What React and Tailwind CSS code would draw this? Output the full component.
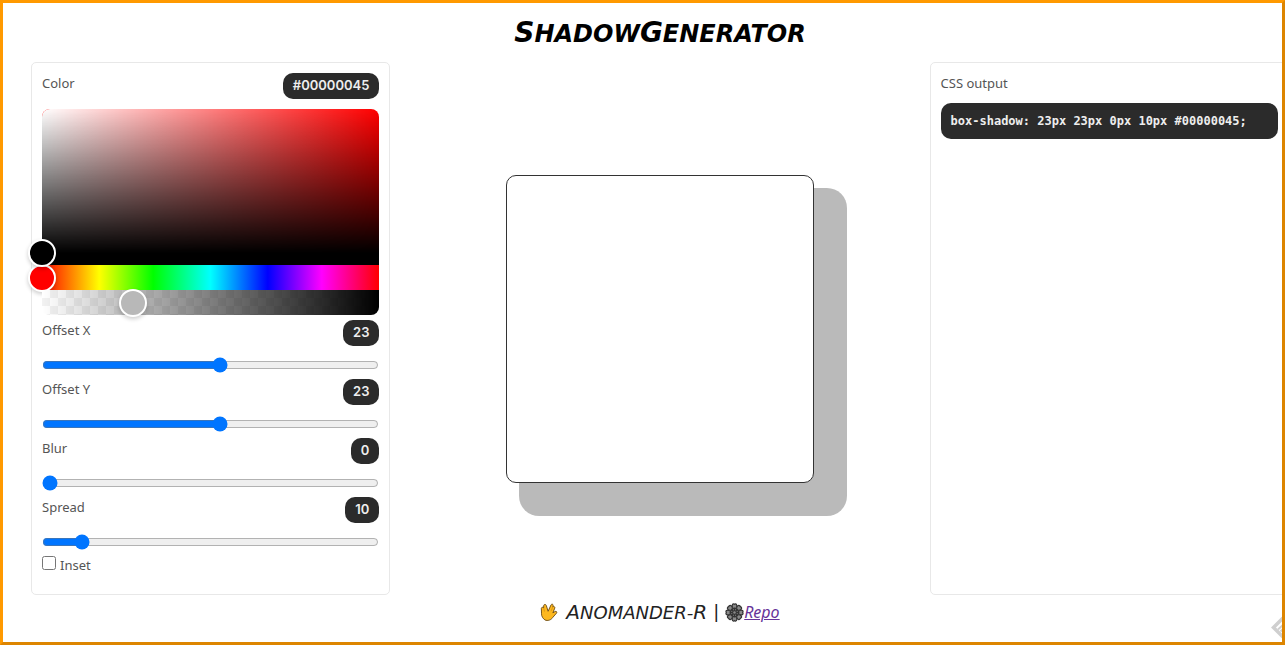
import React, { useState } from "react";

const hueTrack =
  "bg-[linear-gradient(to_right,#f00_0%,#ff0_17%,#0f0_33%,#0ff_50%,#00f_67%,#f0f_83%,#f00_100%)]";

const thumb =
  "block h-7 w-full cursor-pointer appearance-none bg-transparent outline-none [&::-webkit-slider-thumb]:size-7 [&::-webkit-slider-thumb]:appearance-none [&::-webkit-slider-thumb]:rounded-full [&::-webkit-slider-thumb]:border-2 [&::-webkit-slider-thumb]:border-white [&::-webkit-slider-thumb]:shadow-[0_2px_4px_rgba(0,0,0,0.2)]";

function Badge({ children }) {
  return (
    <output className="flex h-[26px] items-center rounded-[10px] bg-[#2b2b2b] px-[10px] font-['Inter',sans-serif] text-[13px] font-semibold text-[#eee]">
      {children}
    </output>
  );
}

function ColorPicker({ hue, alpha, onHue, onAlpha }) {
  return (
    <div className="mt-[10px] flex flex-col">
      <div
        className="relative z-10 h-[156px] rounded-t-lg border-b-12 border-black bg-[linear-gradient(to_top,#000,transparent),linear-gradient(to_right,#fff,transparent)]"
        style={{ backgroundColor: `hsl(${hue} 100% 50%)` }}
      >
        <button
          type="button"
          aria-label="Saturation and brightness"
          className="absolute top-full left-0 size-7 -translate-x-1/2 -translate-y-1/2 rounded-full border-2 border-white bg-black shadow-[0_2px_4px_rgba(0,0,0,0.2)]"
        />
      </div>
      <div className={`flex h-[25px] items-center ${hueTrack}`}>
        <div className="-mx-[14px] flex-1">
          <input
            type="range"
            aria-label="Hue"
            min="0"
            max="360"
            value={hue}
            onChange={(e) => onHue(Number(e.target.value))}
            className={`${thumb} [&::-webkit-slider-thumb]:bg-[#f00]`}
          />
        </div>
      </div>
      <div className="flex h-[25px] items-center rounded-b-lg bg-[linear-gradient(to_right,transparent,#000),repeating-conic-gradient(#f2f2f2_0%_25%,#fff_0%_50%)] bg-[size:100%_100%,16px_16px]">
        <div className="-mx-[14px] flex-1">
          <input
            type="range"
            aria-label="Alpha"
            min="0"
            max="255"
            value={alpha}
            onChange={(e) => onAlpha(Number(e.target.value))}
            className={`${thumb} [&::-webkit-slider-thumb]:bg-[#b8b8b8]`}
          />
        </div>
      </div>
    </div>
  );
}

function Slider({ id, label, min, max, value, onChange }) {
  return (
    <div className="h-[59px]">
      <div className="flex items-start justify-between">
        <label htmlFor={id} className="leading-5">
          {label}
        </label>
        <Badge>{value}</Badge>
      </div>
      <div className="mt-[11px] flex">
        <input
          id={id}
          type="range"
          min={min}
          max={max}
          value={value}
          onChange={(e) => onChange(Number(e.target.value))}
          className="h-4 w-full accent-[#0075ff]"
        />
      </div>
    </div>
  );
}

function Salute() {
  return (
    <svg viewBox="0 0 20 20" className="size-[18px]" aria-hidden="true">
      <path
        d="M5.500 18.800C3.500 17.500 1.600 15 1.700 12L1.500 6C1.700 4.500 3.400 4.300 4 5.500L4.100 2.800C4.500 1.200 6.500 1.200 7 2.800L9 9.200L12.300 2C13 .8 14.800 1.300 14.600 2.800L14.300 4.200C15.500 3.400 16.900 4.400 16.400 5.700L14.300 11L16.800 9.400C18.300 8.800 19.200 10.200 18.300 11.300L13.800 16.500C12.500 18.700 8.500 20.300 5.500 18.800Z"
        fill="#fdb81e"
        stroke="#6a4a12"
        strokeWidth="1"
        strokeLinejoin="round"
      />
      <path d="M4 5.500L5 9.500M14.300 4.200L12.300 9" fill="none" stroke="#c98512" strokeWidth="0.700" />
    </svg>
  );
}

const spokes = [0, 45, 90, 135, 180, 225, 270, 315];

function Wheel() {
  return (
    <svg viewBox="-10 -10 20 20" className="size-[19px]" fill="none" stroke="#333" aria-hidden="true">
      <circle r="6" fill="#8a8a8a" stroke="none" />
      <circle r="2" strokeWidth="1.200" />
      {spokes.map((a) => (
        <g key={a} transform={`rotate(${a})`}>
          <path d="M0 -2V-9" strokeWidth="1.100" />
          <path
            d="M-2.100 -5.200C-3.400 -8 -1.600 -9.800 0 -8.600C1.600 -9.800 3.400 -8 2.100 -5.200"
            fill="#8a8a8a"
            strokeWidth="1.300"
          />
          <path d="M0 -3L-2.100 -5.400M0 -3L2.100 -5.400" strokeWidth="1.100" />
        </g>
      ))}
    </svg>
  );
}

export default function App() {
  const [hue, setHue] = useState(0);
  const [alpha, setAlpha] = useState(69);
  const [x, setX] = useState(23);
  const [y, setY] = useState(23);
  const [blur, setBlur] = useState(0);
  const [spread, setSpread] = useState(10);
  const [inset, setInset] = useState(false);

  const color = `#000000${alpha.toString(16).padStart(2, "0")}`;
  const shadow = `${inset ? "inset " : ""}${x}px ${y}px ${blur}px ${spread}px ${color}`;

  return (
    <div className="relative min-h-screen overflow-hidden border-3 border-t-[#ff9900] border-r-[#dd8500] border-b-[#dd8500] border-l-[#ff9900] bg-white font-['Noto_Sans',sans-serif] text-[13px] text-[#555]">
      <div className="-mr-[7px] ml-7 flex flex-col">
        <h1 className="flex h-[59px] items-center justify-center font-['DejaVu_Sans',sans-serif] text-2xl font-bold text-black italic">
          <span className="uppercase">
            <span className="text-[28px]">S</span>hadow<span className="text-[28px]">G</span>enerator
          </span>
        </h1>

        <main className="grid grid-cols-[2fr_3fr_2fr]">
          <section className="rounded-[5px] border border-[#e8e8e8] px-[10px] pt-[10px] pb-5">
            <div className="flex items-start justify-between">
              <span className="leading-5">Color</span>
              <Badge>{color}</Badge>
            </div>
            <ColorPicker hue={hue} alpha={alpha} onHue={setHue} onAlpha={setAlpha} />
            <div className="mt-[5px]">
              <Slider id="offset-x" label="Offset X" min={-400} max={400} value={x} onChange={setX} />
              <Slider id="offset-y" label="Offset Y" min={-400} max={400} value={y} onChange={setY} />
              <Slider id="blur" label="Blur" min={0} max={100} value={blur} onChange={setBlur} />
              <Slider id="spread" label="Spread" min={0} max={100} value={spread} onChange={setSpread} />
            </div>
            <label className="flex gap-1 leading-[18px]">
              <input
                type="checkbox"
                checked={inset}
                onChange={(e) => setInset(e.target.checked)}
                className="size-[14px]"
              />
              Inset
            </label>
          </section>

          <section className="flex items-center justify-center">
            <div
              className="size-[308px] rounded-[10px] border border-[#333] bg-white"
              style={{ boxShadow: shadow }}
            />
          </section>

          <section className="rounded-[5px] border border-[#e8e8e8] p-[10px]">
            <h2 className="leading-5">CSS output</h2>
            <pre className="mt-[10px] flex h-9 items-center rounded-[10px] bg-[#2b2b2b] px-[10px] text-xs font-bold text-[#eee]">
              <code className="font-['DejaVu_Sans_Mono',monospace]">box-shadow: {shadow};</code>
            </pre>
          </section>
        </main>

        <footer className="flex h-[34px] items-center justify-center font-['DejaVu_Sans',sans-serif] text-lg text-[#222] italic">
          <Salute />
          <span className="ml-2 uppercase">
            <span className="text-xl">A</span>nomander-<span className="text-xl">R</span>
          </span>
          <span className="mx-[6px]">|</span>
          <Wheel />
          <a href="#repo" className="font-['Noto_Sans',sans-serif] text-base text-[#663399] underline">
            Repo
          </a>
        </footer>
      </div>

      <div className="absolute right-0 bottom-0 h-7 w-[11px] overflow-hidden" aria-hidden="true">
        <svg viewBox="0 0 11 28" className="h-7 w-[11px]" fill="none" stroke="#cfcfcf">
          <path d="M12 4L2.500 13.500L12 23" strokeWidth="3.500" />
          <path d="M12 11L7 15.500M12 15L9.500 17.500" strokeWidth="2" />
        </svg>
      </div>
    </div>
  );
}
